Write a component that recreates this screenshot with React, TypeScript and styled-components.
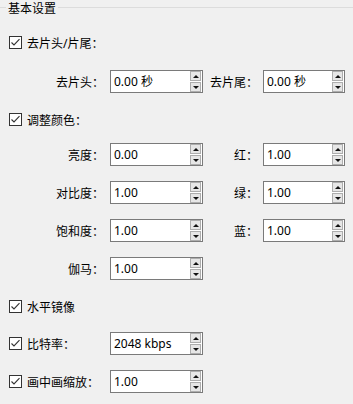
import { Fragment } from 'react';
import styled, { createGlobalStyle } from 'styled-components';

const GlobalStyle = createGlobalStyle`
  html, body {
    margin: 0;
    padding: 0;
    background: #f0f0f0;
  }
  body {
    font-family: "Noto Sans", "Noto Sans CJK SC", sans-serif;
    font-size: 12px;
    color: #000;
  }
`;

const Panel = styled.div`
  width: 353px;
  height: 404px;
  overflow: hidden;
  background: #f0f0f0;
`;

const GroupHeader = styled.div`
  display: flex;
  align-items: center;
  height: 17px;
`;

const HeaderLine = styled.div<{ $grow?: boolean }>`
  height: 1px;
  background: #dcdcdc;
  margin-top: -3px;
  flex: ${({ $grow }) => ($grow ? 1 : '0 0 6px')};
`;

const GroupTitle = styled.span`
  padding: 0 2px;
  line-height: 17px;
`;

const Body = styled.div`
  display: flex;
  flex-direction: column;
  gap: 15px;
  padding-top: 14px;
`;

const CheckRow = styled.label`
  display: flex;
  align-items: center;
  height: 23px;
  padding-left: 9px;
  gap: 5px;
  white-space: nowrap;
`;

const FieldGrid = styled.div<{ $shift?: number }>`
  display: grid;
  grid-template-columns: 110px 93px 60px 82px;
  grid-auto-rows: 23px;
  row-gap: 15px;
  margin-top: ${({ $shift }) => $shift ?? 0}px;
`;

const FieldLabel = styled.span<{ $pad?: number }>`
  display: flex;
  align-items: center;
  justify-content: flex-end;
  padding-right: ${({ $pad }) => $pad ?? 6}px;
  white-space: nowrap;
`;

const Box = styled.span`
  display: inline-block;
  width: 13px;
  height: 13px;
  box-sizing: border-box;
  border: 1px solid #333;
  background: #fff;
  flex: 0 0 13px;
  svg {
    display: block;
  }
`;

const SpinBox = styled.div`
  display: flex;
  align-items: center;
  box-sizing: border-box;
  height: 23px;
  border: 1px solid #7a7a7a;
  background: #fff;
  padding: 0 1px 0 3px;
`;

const SpinText = styled.span`
  flex: 1;
  white-space: nowrap;
  line-height: 21px;
`;

const SpinButtons = styled.div`
  display: flex;
  flex-direction: column;
  gap: 1px;
`;

const SpinButton = styled.div`
  width: 11px;
  height: 10px;
  box-sizing: border-box;
  border: 1px solid #adadad;
  background: #e6e6e6;
  display: flex;
  align-items: center;
  justify-content: center;
`;

const Arrow = styled.span<{ $down?: boolean }>`
  width: 0;
  height: 0;
  border-left: 3px solid transparent;
  border-right: 3px solid transparent;
  ${({ $down }) => ($down ? 'border-top: 3px solid #111;' : 'border-bottom: 3px solid #111;')}
`;

const Check = () => (
  <Box>
    <svg width="11" height="11" viewBox="0 0 11 11">
      <path d="M1.5 5.5 L4 8 L9.5 2.2" fill="none" stroke="#333" strokeWidth="1.1" />
    </svg>
  </Box>
);

const Spin = ({ value }: { value: string }) => (
  <SpinBox>
    <SpinText>{value}</SpinText>
    <SpinButtons>
      <SpinButton><Arrow /></SpinButton>
      <SpinButton><Arrow $down /></SpinButton>
    </SpinButtons>
  </SpinBox>
);

const colorRows = [
  { left: '亮度：', lv: '0.00', right: '红：', rv: '1.00' },
  { left: '对比度：', lv: '1.00', right: '绿：', rv: '1.00' },
  { left: '饱和度：', lv: '1.00', right: '蓝：', rv: '1.00' },
];

const App = () => {
  return (
    <Panel>
      <GlobalStyle />
      <GroupHeader>
        <HeaderLine />
        <GroupTitle>基本设置</GroupTitle>
        <HeaderLine $grow />
      </GroupHeader>
      <Body>
        <CheckRow><Check />去片头/片尾：</CheckRow>
        <FieldGrid $shift={1}>
          <FieldLabel>去片头：</FieldLabel>
          <Spin value="0.00 秒" />
          <FieldLabel $pad={5}>去片尾：</FieldLabel>
          <Spin value="0.00 秒" />
        </FieldGrid>
        <CheckRow><Check />调整颜色：</CheckRow>
        <FieldGrid $shift={-3}>
          {colorRows.map((row) => (
            <Fragment key={row.left}>
              <FieldLabel>{row.left}</FieldLabel>
              <Spin value={row.lv} />
              <FieldLabel $pad={5}>{row.right}</FieldLabel>
              <Spin value={row.rv} />
            </Fragment>
          ))}
          <FieldLabel>伽马：</FieldLabel>
          <Spin value="1.00" />
        </FieldGrid>
        <CheckRow><Check />水平镜像</CheckRow>
        <FieldGrid $shift={-1}>
          <CheckRow><Check />比特率：</CheckRow>
          <Spin value="2048 kbps" />
          <span />
          <span />
          <CheckRow><Check />画中画缩放：</CheckRow>
          <Spin value="1.00" />
        </FieldGrid>
      </Body>
    </Panel>
  );
};

export default App;
